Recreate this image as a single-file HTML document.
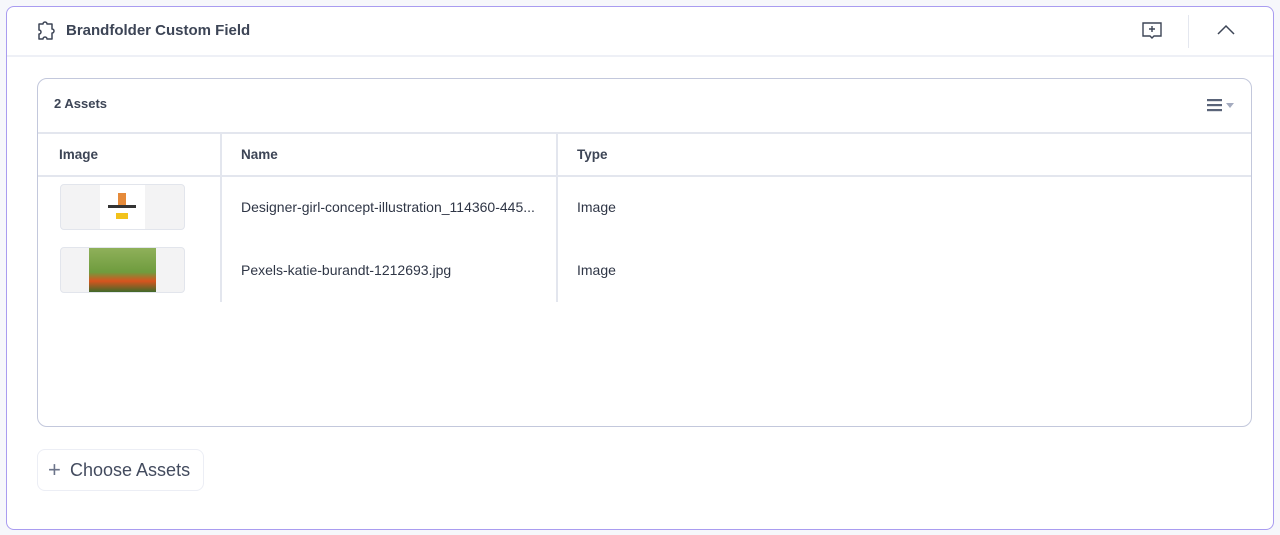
<!DOCTYPE html>
<html><head><style>
*{box-sizing:border-box;margin:0;padding:0}
body{width:1280px;height:535px;background:#f6f7fb;font-family:"Liberation Sans",sans-serif;color:#3d4556;position:relative;overflow:hidden}
.card{position:absolute;left:6px;top:6px;width:1268px;height:524px;background:#fff;border:1.5px solid #a99cf0;border-radius:8px}
.hdr{position:absolute;left:0;top:0;right:0;height:50px;border-bottom:2px solid #eef0f6}
.title{position:absolute;left:59px;top:15px;font-size:15px;font-weight:bold;color:#3d4556}
.sep{position:absolute;left:1181px;top:8px;width:1px;height:33px;background:#e4e7ef}
.inner{position:absolute;left:30px;top:71px;width:1215px;height:349px;border:1.5px solid #c3c8dc;border-radius:10px;overflow:hidden}
.cnt{position:absolute;left:16px;top:17px;font-size:13px;font-weight:bold}
.hline{position:absolute;left:0;right:0;height:1.5px;background:#e3e6ee}
.vline{position:absolute;width:1.5px;background:#e3e6ee;top:54px;height:169px}
.th{position:absolute;top:68px;font-size:13.5px;font-weight:bold}
.td{position:absolute;font-size:14px;color:#2f3646}
.thumb{position:absolute;left:22px;width:125px;height:46px;background:#f3f3f4;border:1px solid #e2e5ec;border-radius:4px;overflow:hidden}
.btn{position:absolute;left:30px;top:442px;width:167px;height:42px;border:1px solid #eceef5;border-radius:8px;font-size:18px;color:#434b5e;padding:10px 0 0 32px}
</style></head><body>
<div class="card">
 <div class="hdr">
  <svg style="position:absolute;left:29px;top:13px" width="22" height="22" viewBox="0 0 22 22" fill="none" stroke="#3d4556" stroke-width="1.5" stroke-linejoin="round"><path d="M3 4h4a2 2 0 0 1 4 0h5v5a2 2 0 0 1 0 4v6h-5a2 2 0 0 0-4 0H3v-5a2 2 0 0 0 0-4z"/></svg>
  <div class="title">Brandfolder Custom Field</div>
  <svg style="position:absolute;left:1134px;top:14px" width="22" height="20" viewBox="0 0 22 20" fill="none" stroke="#3d4556" stroke-width="1.4"><path d="M2 2h18v13h-7l-2 2-2-2H2z"/><path d="M11 5v6M8 8h6"/></svg>
  <div class="sep"></div>
  <svg style="position:absolute;left:1209px;top:16px" width="20" height="14" viewBox="0 0 20 14" fill="none" stroke="#3d4556" stroke-width="1.5"><path d="M2 11l8-8 8 8"/></svg>
 </div>
 <div class="inner">
  <div class="cnt">2 Assets</div>
  <svg style="position:absolute;left:1168px;top:19px" width="32" height="16" viewBox="0 0 32 16"><g fill="#5a6479"><rect x="1" y="1" width="15" height="2.2"/><rect x="1" y="6" width="15" height="2.2"/><rect x="1" y="11" width="15" height="2.2"/></g><path d="M20 5h8l-4 5z" fill="#a4abbf"/></svg>
  <div class="hline" style="top:53px"></div>
  <div class="hline" style="top:96px"></div>
  <div class="vline" style="left:182px"></div>
  <div class="vline" style="left:518px"></div>
  <div class="th" style="left:21px">Image</div>
  <div class="th" style="left:203px">Name</div>
  <div class="th" style="left:539px">Type</div>
  <div class="thumb" style="top:105px"><div style="position:absolute;left:39px;top:0;width:45px;height:44px;background:#fff"><div style="position:absolute;left:8px;top:20px;width:28px;height:3px;background:#333"></div><div style="position:absolute;left:18px;top:8px;width:8px;height:12px;background:#e58a3a"></div><div style="position:absolute;left:16px;top:28px;width:12px;height:6px;background:#f2c21b"></div></div></div>
  <div class="thumb" style="top:168px"><div style="position:absolute;left:28px;top:0;width:67px;height:44px;background:linear-gradient(#8fb05a,#6f9c3e 55%,#d8541e 75%,#3f6a2a)"></div></div>
  <div class="td" style="left:203px;top:120px">Designer-girl-concept-illustration_114360-445...</div>
  <div class="td" style="left:539px;top:120px">Image</div>
  <div class="td" style="left:203px;top:183px">Pexels-katie-burandt-1212693.jpg</div>
  <div class="td" style="left:539px;top:183px">Image</div>
 </div>
 <div class="btn"><span style="position:absolute;left:10px;top:7px;font-size:22px;color:#6b7389;font-weight:300">+</span>Choose Assets</div>
</div>
</body></html>
